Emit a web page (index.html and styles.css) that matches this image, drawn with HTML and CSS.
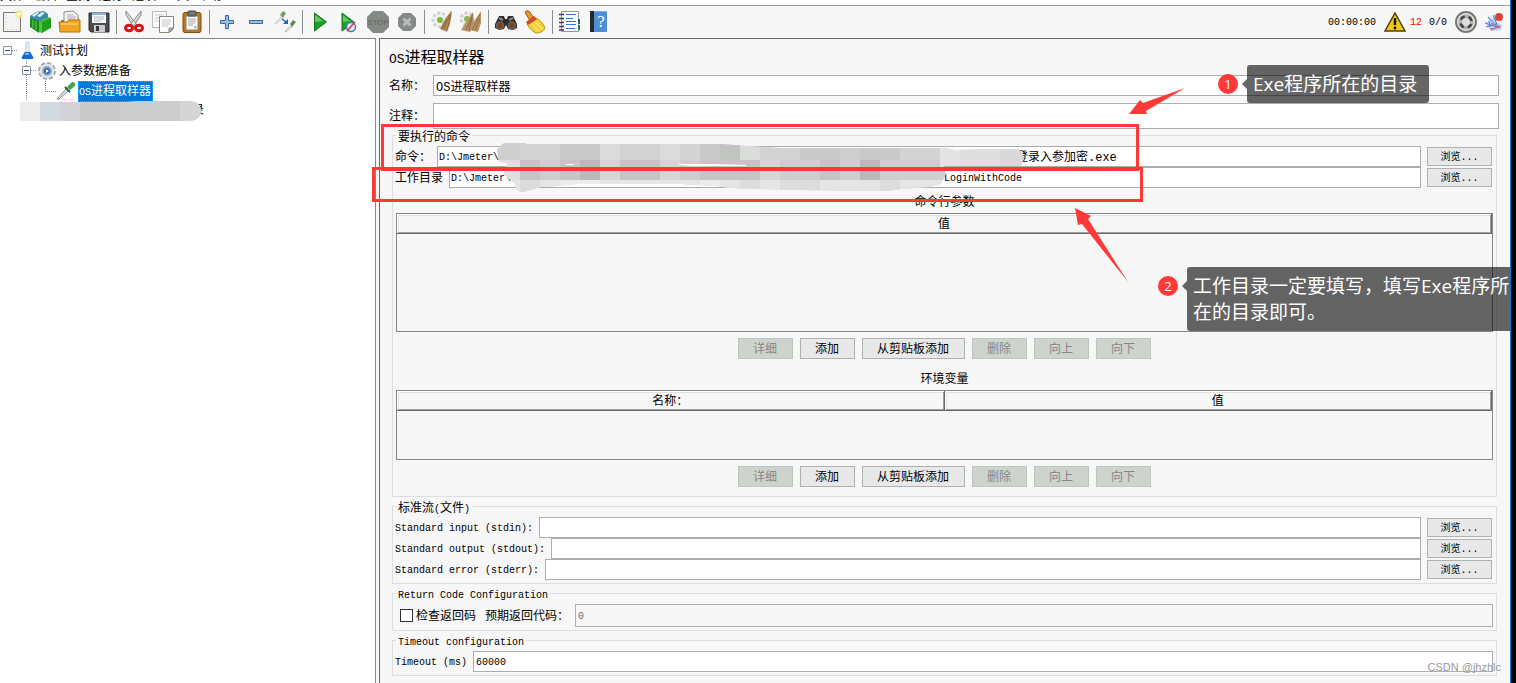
FILE: index.html
```html
<!DOCTYPE html>
<html lang="zh-CN">
<head>
<meta charset="utf-8">
<title>OS进程取样器</title>
<link rel="stylesheet" href="styles.css">
</head>
<body>
<div class="window">
  <nav class="menubar"><a href="#">文件</a><a href="#">编辑</a><a href="#">查找</a><a href="#">运行</a><a href="#">选项</a><a href="#">工具</a><a href="#">帮助</a></nav>

  <header class="toolbar">
    <button class="tool" aria-label="新建"><svg viewBox="0 0 24 24"><path d="M3.500 2.500h17v19h-17z" fill="#f4f4f2" stroke="#77796f"/><path d="M6 5v15M7 19.500h12" stroke="#c9c9c9" stroke-dasharray="1 2"/><circle cx="19" cy="4" r="4" fill="#f6e98a" opacity=".8"/><circle cx="19" cy="4" r="1.800" fill="#fffef0"/></svg></button>
    <button class="tool" aria-label="模板"><svg viewBox="0 0 24 24"><path d="M1 6l6-4 8-1 4 3v9l-9 7-9-5z" fill="#3b8caa"/><path d="M3 5l5-3 2 1-5 4zM8 6l5-4 3 1-5 4z" fill="#e2f1f5"/><path d="M1 8l9 3v12l-9-6z" fill="#168b1b"/><path d="M10 11l3 1v-2l7-3 2 1v10l-9 5-3-1z" fill="#4cc63e"/><path d="M13 12l9-4v9l-9 6z" fill="#1f9f1c"/><path d="M4 10v8M7 11v9" stroke="#67d65b"/></svg></button>
    <button class="tool" aria-label="打开"><svg viewBox="0 0 24 24"><path d="M3 10h4l2-2h12v14H3z" fill="#b86d06"/><path d="M6 2l9-1 5 4v11H6z" fill="#f5f5f5" stroke="#8d8d8d"/><path d="M9 5h6M9 7h9M9 9h9" stroke="#aaa"/><path d="M1 12h8l2-2h11v12H2z" fill="#eda522" stroke="#bd7506"/><path d="M3 14h17" stroke="#ffe09a"/></svg></button>
    <button class="tool" aria-label="保存"><svg viewBox="0 0 24 24"><path d="M2 3h20v19H4l-2-2z" fill="#4a4c50" stroke="#292a2d"/><path d="M5 3h14v10H5z" fill="#f6f8fa"/><path d="M5 3h14v2H5z" fill="#87b7dc"/><path d="M7 7h10M7 9h10M7 11h7" stroke="#b7c0c7"/><path d="M7 15h11v7H7z" fill="#c8cacc"/><path d="M9 16h3v5H9z" fill="#34363a"/></svg></button>
    <i class="sep"></i>
    <button class="tool" aria-label="剪切"><svg viewBox="0 0 24 24"><path d="M4 1l11 14-3 2L4 5zM19 1L8 15l3 2 8-12z" fill="#d8d8d8" stroke="#888"/><ellipse cx="7" cy="18" rx="3.500" ry="2.800" fill="none" stroke="#d81313" stroke-width="3"/><ellipse cx="17" cy="18" rx="3.500" ry="2.800" fill="none" stroke="#d81313" stroke-width="3"/></svg></button>
    <button class="tool" aria-label="复制"><svg viewBox="0 0 24 24"><path d="M1.500 1.500h14v16h-14z" fill="#fafafa" stroke="#b9bbb6"/><path d="M4 5h9M4 8h9M4 11h6" stroke="#ccc"/><path d="M8.500 6.500h14v12l-4 4h-10z" fill="#fcfcfc" stroke="#858781"/><path d="M11 10h9M11 12h9M11 14h8M11 16h6" stroke="#c7c7c7"/><path d="M18 22v-4h4z" fill="#d0d0d0" stroke="#858781"/></svg></button>
    <button class="tool" aria-label="粘贴"><svg viewBox="0 0 24 24"><rect x="3" y="2.500" width="18" height="20" rx="2" fill="#b87916" stroke="#875303"/><path d="M6 6h12v14H6z" fill="#f7f7f5" stroke="#888"/><rect x="8" y="1" width="8" height="5" rx="1" fill="#777" stroke="#444"/><path d="M8 9h8M8 11h8M8 13h7M8 15h5" stroke="#aaa"/><path d="M14 20v-4h4z" fill="#bbb"/></svg></button>
    <i class="sep"></i>
    <button class="tool" aria-label="展开"><svg viewBox="0 0 24 24"><path d="M10.500 5.500h3v5h5v3h-5v5h-3v-5h-5v-3h5z" fill="#9bbde3" stroke="#3469a8"/></svg></button>
    <button class="tool" aria-label="折叠"><svg viewBox="0 0 24 24"><path d="M5.500 10.500h13v3h-13z" fill="#9bbde3" stroke="#3469a8"/></svg></button>
    <button class="tool" aria-label="切换"><svg viewBox="0 0 24 24"><path d="M2 13l6-6 2 1-7 6z" fill="#e8ece6" stroke="#bbb" stroke-width=".7"/><path d="M7 5l3-4 3 2-3 5z" fill="#6ba05c"/><path d="M12 21l5-5 2 1-6 5z" fill="#e8ece6" stroke="#aaa" stroke-width=".7"/><path d="M17 14l3-4 3 2-4 5z" fill="#5f8b58"/><path d="M9 9l4 3" stroke="#1b65c8" stroke-width="1.500"/><path d="M15 9v5h-5z" fill="#1b65c8"/></svg></button>
    <i class="sep"></i>
    <button class="tool" aria-label="启动"><svg viewBox="0 0 24 24"><path d="M6.500 3l12 9-12 9z" fill="#18a221" stroke="#14731a"/><path d="M7 5l8 6-8 1z" fill="#69c76c"/></svg></button>
    <button class="tool" aria-label="无间隔启动"><svg viewBox="0 0 24 24"><path d="M5 3l12 9-12 9z" fill="#18a221" stroke="#14731a"/><path d="M6 5l7 6-7 1z" fill="#69c76c"/><circle cx="14" cy="17" r="4.500" fill="#dce8f5" stroke="#5379b3" stroke-width="1.500"/><path d="M10 21l8-9" stroke="#d44040" stroke-width="1.500"/></svg></button>
    <button class="tool" aria-label="停止" disabled><svg viewBox="0 0 24 24"><path d="M7 1h10l6 6v10l-6 6H7l-6-6V7z" fill="#858985"/><text x="12" y="15" text-anchor="middle" class="stop-text">STOP</text></svg></button>
    <button class="tool" aria-label="关闭" disabled><svg viewBox="0 0 24 24"><path d="M8 3h8l5 5v8l-5 5H8l-5-5V8z" fill="#868a87"/><path d="M8.500 8.500l7 7M15.500 8.500l-7 7" stroke="#b9bcb9" stroke-width="3"/></svg></button>
    <i class="sep"></i>
    <button class="tool" aria-label="清除"><svg viewBox="0 0 24 24"><circle cx="10" cy="10" r="7" fill="#f1f1f1" stroke="#d2d2d2" stroke-width="3" stroke-dasharray="3 2"/><circle cx="10" cy="10" r="3" fill="#77bd32"/><path d="M21 1l-8 11-3 7 7 3 3-8 2-12z" fill="#b58a59"/><path d="M20 4l-6 15M17 9l-5 10M21 5l-4 15" stroke="#8a6a45"/></svg></button>
    <button class="tool" aria-label="清除全部"><svg viewBox="0 0 24 24"><circle cx="8" cy="9" r="6" fill="#f1f1f1" stroke="#d2d2d2" stroke-width="3" stroke-dasharray="3 2"/><circle cx="8" cy="9" r="3" fill="#86b957"/><path d="M14 2L7 12 2 20l9 2 4-8zM22 1l-8 12-3 7 8 2 3-9z" fill="#bd9364"/><path d="M14 4L7 20M13 8l-3 13M21 4l-8 16M21 8l-5 13" stroke="#8a6a45"/></svg></button>
    <i class="sep"></i>
    <button class="tool" aria-label="查找"><svg viewBox="0 0 24 24"><path d="M5 6h5l1 3h2l1-3h5l4 8v4l-4 2-5-1-2-4-2 4-5 1-4-2v-4z" fill="#2c2c2c"/><circle cx="6" cy="15.500" r="3.500" fill="#7d3e26" stroke="#646464" stroke-width="1.500"/><circle cx="18" cy="15.500" r="3.500" fill="#7d3e26" stroke="#646464" stroke-width="1.500"/><path d="M5 8l4 2M15 10l4-2" stroke="#888" stroke-width="2"/></svg></button>
    <button class="tool" aria-label="重置查找"><svg viewBox="0 0 24 24"><path d="M2 2q2-3 5 0l4 7-4 2z" fill="#e09a32" stroke="#9b5b0b"/><path d="M4 14c4-1 7-3 9-6 4 2 7 5 9 10-2 4-6 5-9 5-4-2-7-5-9-9z" fill="#f4d338" stroke="#bc910b"/><path d="M3 12l8-6 3 3-9 6z" fill="#d84a24"/><path d="M9 14l6 7M12 12l7 7" stroke="#fff09b"/></svg></button>
    <i class="sep"></i>
    <button class="tool" aria-label="函数助手"><svg viewBox="0 0 24 24"><path d="M3.500 1.500h17v20h-17z" fill="#fbfbfb" stroke="#999"/><path d="M8 4.500h10M8 8.500h7M8 11.500h10M8 14.500h10M8 18.500h9" stroke="#3476d1"/><path d="M1 4.500h5M1 8.500h5M1 12.500h5M1 16.500h5M1 20h5" stroke="#3c3c3c" stroke-width="1.300"/><path d="M20 9h2v5h-2z" fill="#1d61ad"/><path d="M20 15h2v5h-2z" fill="#148b32"/></svg></button>
    <button class="tool" aria-label="帮助"><svg viewBox="0 0 24 24"><path d="M3 1h17v21H3z" fill="#4e8ed6"/><path d="M3 1h4v21H3z" fill="#25282d"/><path d="M7 1.500h13" stroke="#7ab1ea"/><text x="14" y="17" text-anchor="middle" class="help-text">?</text></svg></button>
    <div class="status">
      <span class="clock">00:00:00</span>
      <svg class="warn" viewBox="0 0 22 20"><path d="M11 1l10 18H1z" fill="#f2c614" stroke="#4e4300" stroke-width="1.500"/><path d="M11 6v7" stroke="#111" stroke-width="2.500"/><circle cx="11" cy="16" r="1.400"/></svg>
      <span class="errors">12</span>
      <span class="threads">0/0</span>
      <svg class="disc" viewBox="0 0 24 24"><circle cx="12" cy="12" r="10" fill="#e4e4e4" stroke="#777977" stroke-width="2"/><circle cx="12" cy="12" r="7.500" fill="#aeb0ae"/><circle cx="12" cy="12" r="5.500" fill="none" stroke="#454745" stroke-width="3" stroke-dasharray="4.640 4" stroke-dashoffset="-2"/><circle cx="12" cy="12" r="4" fill="#ddd"/></svg>
      <svg class="feather" viewBox="0 0 20 20"><path d="M1 11l4-2-1-5 5 3 2-5 2 8 5 3-1 5-10 1z" fill="#bcd3f6"/><path d="M1 11l12 4M4 5l10 11M9 3l5 12M2 15l10-3M7 18l9-4M5 9l1 6" stroke="#4d80d4"/><path d="M6 17l11-2M7 11l7 4" stroke="#d66"/><circle cx="15" cy="5" r="4" fill="#dc4337"/></svg>
    </div>
  </header>

  <main class="workspace">
    <aside class="tree">
      <div class="node"><svg class="toggle" viewBox="0 0 18 20"><path d="M12 9.500h6" stroke="#888" stroke-dasharray="1 1"/><path d="M3.500 5.500h8v8h-8z" fill="#fff" stroke="#8a95a3"/><path d="M5 9.500h5" stroke="#2d4f9c"/></svg><svg class="node-icon" viewBox="0 0 20 20"><path d="M8 1h3v8l4 7q1 2-2 2H6q-3 0-2-2l4-7z" fill="#e4f0fa" stroke="#c5d0da"/><path d="M7 11h5l3 5q1 2-2 2H6q-3 0-2-2z" fill="#1768d3"/><path d="M7 13h4" stroke="#75b7ff" stroke-width="2"/></svg><span class="node-text">测试计划</span></div>
      <div class="node level-1"><svg class="toggle" viewBox="0 0 18 20"><path d="M7.500 0v5M7.500 14v6M12 9.500h6" stroke="#888" stroke-dasharray="1 1"/><path d="M3.500 5.500h8v8h-8z" fill="#fff" stroke="#8a95a3"/><path d="M5 9.500h5" stroke="#2d4f9c"/></svg><svg class="node-icon" viewBox="0 0 20 20"><circle cx="10" cy="10" r="8" fill="#d9dde2" stroke="#a3a9b1" stroke-width="2" stroke-dasharray="4 2.280"/><circle cx="10" cy="10" r="7" fill="#e3e6ea"/><circle cx="10" cy="10" r="4" fill="#2f62ab" stroke="#8fa5c6" stroke-width="2"/><path d="M9 8l3 2-3 2z" fill="#fff"/></svg><span class="node-text">入参数据准备</span></div>
      <div class="node level-2"><svg class="toggle wide" viewBox="0 0 36 20"><path d="M6.500 0v20M25.500 0v10M25 10.500h11" fill="none" stroke="#888" stroke-dasharray="1 1"/></svg><svg class="node-icon" viewBox="0 0 20 20"><path d="M1 18l9-10 2 2-9 8z" fill="#e4e9e5" stroke="#666" stroke-width=".8"/><path d="M11 6l5-5q4 0 3 4l-5 4z" fill="#4fa146"/><path d="M9 6l5 5" stroke="#315c2f" stroke-width="2"/><path d="M5 19h11" stroke="#ddd"/></svg><span class="node-text selected"><small>OS</small>进程取样器</span></div>
      <div class="node redacted"><svg class="blur" viewBox="0 0 182 20"><defs><clipPath id="tree-clip"><path d="M0 1h107l10-1h53q11 1 11 10t-11 10H0z"/></clipPath></defs><g clip-path="url(#tree-clip)"><path fill="#cdcdcd" d="M0 0h182v20H0z"/><path fill="#ececef" d="M0 0h20v20H0z"/><path fill="#d2d9df" d="M20 0h20v20H20z"/><path fill="#d3d3d5" d="M40 0h20v20H40z"/><path fill="#c9c9ca" d="M60 0h40v20H60z"/><path fill="#d5d5d5" d="M160 0h22v20h-22z"/></g></svg><span class="remnant">录</span></div>
    </aside>

    <section class="panel">
      <h1 class="title"><small>OS</small>进程取样器</h1>
      <div class="row main-row"><label for="name">名称：</label><input id="name" class="field cjk" value="OS进程取样器"></div>
      <div class="row main-row comment"><label for="note">注释：</label><input id="note" class="field cjk tall"></div>

      <fieldset class="group command">
        <legend>要执行的命令</legend>
        <div class="row"><label for="cmd">命令：</label><div class="field split"><input id="cmd" class="head" value="D:\Jmeter\"><input class="tail" aria-label="命令文件" value="登录入参加密.exe"></div><button class="browse">浏览...</button></div>
        <div class="row"><label for="dir">工作目录</label><div class="field split"><input id="dir" class="head short" value="D:\Jmeter\."><input class="tail latin" aria-label="目录名" value="LoginWithCode"></div><button class="browse">浏览...</button></div>
        <table class="grid args">
          <caption>命令行参数</caption>
          <thead><tr><th>值</th></tr></thead>
          <tbody><tr><td></td></tr></tbody>
        </table>
        <div class="actions"><button disabled>详细</button><button>添加</button><button class="long">从剪贴板添加</button><button disabled>删除</button><button disabled>向上</button><button disabled>向下</button></div>
        <table class="grid vars">
          <caption>环境变量</caption>
          <thead><tr><th>名称：</th><th>值</th></tr></thead>
          <tbody><tr><td colspan="2"></td></tr></tbody>
        </table>
        <div class="actions"><button disabled>详细</button><button>添加</button><button class="long">从剪贴板添加</button><button disabled>删除</button><button disabled>向上</button><button disabled>向下</button></div>
      </fieldset>

      <fieldset class="group">
        <legend>标准流<small>(</small>文件<small>)</small></legend>
        <div class="row"><label class="latin" for="in">Standard input (stdin):</label><input id="in" class="field"><button class="browse">浏览...</button></div>
        <div class="row"><label class="latin" for="out">Standard output (stdout):</label><input id="out" class="field"><button class="browse">浏览...</button></div>
        <div class="row"><label class="latin" for="err">Standard error (stderr):</label><input id="err" class="field"><button class="browse">浏览...</button></div>
      </fieldset>

      <fieldset class="group">
        <legend class="latin">Return Code Configuration</legend>
        <div class="row"><input type="checkbox" id="check" class="check"><label for="check" class="check-label">检查返回码</label><label for="code">预期返回代码：</label><input id="code" class="field medium" value="0" disabled></div>
      </fieldset>

      <fieldset class="group">
        <legend class="latin">Timeout configuration</legend>
        <div class="row"><label class="latin" for="timeout">Timeout (ms)</label><input id="timeout" class="field" value="60000"></div>
      </fieldset>
    </section>
  </main>

  <svg class="marks" width="1510" height="400" viewBox="0 0 1510 400">
    <defs>
      <clipPath id="smudge"><path d="M500 146L504 143H526V144H720L748 146 780 148H945L955 150 998 149H1018L1022 152 1024 158 1021 166H944L946 174 941 184 930 187 900 189 887 191 800 190 730 188 716 186 680 184H576L557 186 540 187 530 190 524 192 520 192 516 189 515 184 508 178 504 173 506 166 508 163 500 162 498 158 497 150z"/></clipPath>
    </defs>
    <g clip-path="url(#smudge)">
      <path fill="#cecece" d="M490 140h540v60H490z"/>
      <path fill="#d2d2d2" d="M520 140h40v20h-40zM620 140h40v20h-40z"/>
      <path fill="#c9c9c9" d="M560 140h40v20h-40zM700 140h20v20h-20zM800 140h40v20h-40zM860 140h40v20h-40z"/>
      <path fill="#c2c4c2" d="M720 140h20v20h-20z"/>
      <path fill="#dadcda" d="M600 140h20v20h-20zM660 140h20v20h-20zM740 140h20v20h-20z"/>
      <path fill="#d3d3d3" d="M680 140h20v20h-20zM760 140h40v20h-40zM900 140h40v20h-40z"/>
      <path fill="#e3e3e3" d="M940 140h20v30h-20z"/><path fill="#dedede" d="M960 140h40v30h-40z"/><path fill="#d9d9d9" d="M1000 140h30v30h-30z"/>
      <path fill="#dedede" d="M490 160h30v20h-30z"/>
      <path fill="#c5c5c5" d="M520 160h20v20h-20zM560 160h20v20h-20zM620 160h40v20h-40zM700 160h60v20h-60zM820 160h20v20h-20z"/>
      <path fill="#b9b9b9" d="M580 160h20v20h-20zM860 160h20v20h-20z"/><path fill="#d5d7d5" d="M600 160h20v20h-20zM660 160h20v20h-20zM760 160h20v20h-20z"/>
      <path fill="#e5e5e5" d="M490 180h460v20H490z"/><path fill="#ececec" d="M560 180h40v20h-40zM700 180h20v20h-20z"/><path fill="#dbdddb" d="M520 180h20v20h-20zM740 180h20v20h-20zM780 180h40v20h-40zM880 180h20v20h-20z"/>
      <path fill="#fff" d="M566 164h8v1h-8zM679 164h34l33 1v1h-53l-14-1z"/>
    </g>
    <path fill="#ff3838" d="M1185 88l-42 15-3-3-11 14h18l-1-3zM1075 208l16 8-3 3 40 63-46-58-4 1z"/>
    <path fill="none" stroke="#ff3838" stroke-width="3" d="M382.500 125.500h755v44h-755zM373.500 168.500h768v32h-768z"/>
  </svg>
  <div class="note first"><b class="badge">1</b><p class="bubble">Exe程序所在的目录</p></div>
  <div class="note second"><b class="badge">2</b><p class="bubble">工作目录一定要填写，填写Exe程序所<br>在的目录即可。</p></div>
  <span class="watermark">CSDN @jhzhlc</span>
</div>
</body>
</html>
```

FILE: styles.css
```css
* { box-sizing: border-box; }

body {
  margin: 0;
  background: #000;
  color: #000;
  font: 12px/16px "Liberation Mono", "Noto Sans CJK SC", monospace;
}

small, .latin { font-size: 10px; }
button, input { font: inherit; margin: 0; color: inherit; }
label { padding-top: 2px; white-space: nowrap; }

.window {
  position: relative;
  display: flex;
  flex-direction: column;
  height: 100vh;
  margin-right: 5px;
  border-right: 1px solid #0078d7;
  background: #f7f7f7;
  overflow: hidden;
}

.menubar {
  display: flex;
  flex: none;
  align-items: flex-end;
  gap: 9px;
  height: 5px;
  overflow: hidden;
  background: #fff;
}
.menubar a { color: #000; text-decoration: none; }

.toolbar {
  display: flex;
  flex: none;
  align-items: center;
  gap: 5px;
  height: 33px;
  padding-right: 6px;
  border-top: 1px solid #a0a0a0;
}
.tool { width: 24px; height: 24px; padding: 0; border: 0; background: none; }
.tool svg { display: block; width: 24px; height: 24px; }
.sep { width: 1px; height: 24px; background: #8b8f8f; }
.stop-text { font: 8px "Liberation Sans", sans-serif; fill: #636663; }
.help-text { font: 17px "Liberation Serif", serif; fill: #fff; }

.status { display: flex; align-items: center; margin-left: auto; font-size: 10px; }
.status span { padding-top: 2px; }
.clock { margin-right: 8px; }
.warn { width: 22px; height: 20px; margin-right: 4px; }
.errors { margin-right: 7px; color: #f00; }
.threads { margin-right: 7px; }
.disc { width: 24px; height: 24px; margin-right: 6px; }
.feather { width: 20px; height: 20px; }

.workspace { display: flex; flex: 1; gap: 3px; min-height: 0; }

.tree {
  flex: none;
  width: 376px;
  padding-top: 2px;
  border: solid #828790;
  border-width: 1px 1px 0 0;
  background: #fff;
}
.node { display: flex; align-items: center; height: 20px; }
.level-1 { padding-left: 19px; }
.level-2 { padding-left: 20px; }
.toggle { width: 18px; height: 20px; }
.toggle.wide { width: 36px; }
.node-icon { width: 20px; height: 20px; margin-right: 2px; }
.node-text { padding-top: 2px; line-height: 18px; }
.selected { padding: 2px 2px 0 1px; outline: 1px dotted #e28a3c; outline-offset: -1px; background: #0078d7; color: #fff; }
.redacted { padding-left: 20px; }
.blur { width: 182px; height: 20px; z-index: 1; }
.remnant { margin-left: -10px; }

.panel {
  flex: 1;
  min-width: 0;
  padding: 6px 11px 0 9px;
  border: solid #696969;
  border-width: 1px 0 0 1px;
}
.title { margin: 0 0 5px; padding-top: 4px; font-size: 16px; font-weight: 400; line-height: 20px; }
.title small { font-size: 13px; }

.row { display: flex; align-items: center; gap: 6px; }
.main-row { gap: 8px; }
.comment { margin-top: 7px; }

.field {
  flex: 1;
  min-width: 0;
  height: 21px;
  padding: 2px 2px 0;
  border: 1px solid #abadb3;
  border-radius: 0;
  background: #fff;
  font-size: 10px;
}
.field.cjk { padding-top: 0; font-size: 12px; }
.field.tall { height: 26px; }
.field.medium { height: 23px; }
.field:disabled { background: #f7f7f7; color: #6d6d6d; }
.split { display: flex; padding: 2px 1px 0; }
.split input { min-width: 0; padding: 0; border: 0; background: none; }
.head { flex: none; width: 577px; }
.head.short { width: 493px; }
.tail { flex: 1; font-size: 12px; }
.tail.latin { font-size: 10px; }

.group {
  min-width: 0;
  margin: 1px 2px 0 3px;
  padding: 3px 3px 3px 2px;
  border: 1px solid #dcdfdf;
}
.group.command { margin-top: -2px; }
.group legend { margin-left: 1px; padding: 7px 2px 0; line-height: 9px; }
.group legend.latin { padding-top: 5px; line-height: 11px; }

.browse {
  flex: none;
  width: 65px;
  height: 19px;
  margin-right: 1px;
  padding: 2px 0 0;
  border: 1px solid #adb2b5;
  background: #e8e8e8;
  font-size: 10px;
  line-height: 14px;
}

.grid {
  width: calc(100% - 1px);
  margin-left: 1px;
  border: 1px solid #828790;
  border-spacing: 0;
  table-layout: fixed;
}
.grid caption { height: 25px; padding-top: 5px; line-height: 20px; }
.grid th {
  height: 20px;
  padding: 3px 0 0;
  border: solid #696969;
  border-width: 0 1px 1px 0;
  box-shadow: inset 1px 1px #fff, inset -1px -1px #a0a0a0, inset 2px 2px #e3e3e3;
  font-weight: 400;
  line-height: 16px;
}
.grid td { padding: 0; }
.args td { height: 97px; }
.vars td { height: 48px; }

.actions { display: flex; justify-content: center; gap: 7px; padding: 6px 0; }
.actions button {
  width: 55px;
  height: 21px;
  padding: 3px 0 0;
  border: 1px solid #adb2b5;
  background: #e8e8e8;
  line-height: 16px;
}
.actions .long { width: 103px; }
.actions button:disabled { border-color: #bfc5bf; background: #ced3ce; color: #868686; }

.check {
  appearance: none;
  width: 13px;
  height: 13px;
  margin-left: 5px;
  border: 1px solid #333;
  background: #fff;
}
.check-label { margin: 0 3px 0 -3px; }

.marks { position: absolute; top: 0; left: 0; pointer-events: none; }

.note { position: absolute; display: flex; gap: 9px; }
.note.first { left: 1218px; top: 65px; }
.note.second { left: 1158px; top: 267px; }
.badge {
  flex: none;
  width: 20px;
  height: 20px;
  margin-top: 9px;
  border-radius: 50%;
  background: #ff3838;
  color: #fff;
  font: 13px/20px "Open Sans", sans-serif;
  text-align: center;
}
.bubble {
  position: relative;
  margin: 0;
  padding: 6px 12px 6px 6px;
  border-radius: 3px;
  background: rgba(0, 0, 0, .6);
  color: #fff;
  font: 19px/26px "Open Sans", "Noto Sans CJK SC", sans-serif;
  white-space: nowrap;
}
.bubble::before {
  content: "";
  position: absolute;
  left: -5px;
  top: 14px;
  border: solid transparent;
  border-width: 5px 5px 5px 0;
  border-right-color: rgba(0, 0, 0, .6);
}

.watermark {
  position: absolute;
  right: 9px;
  bottom: 8px;
  color: #999;
  font: 11px/16px "Liberation Sans", sans-serif;
}
```
